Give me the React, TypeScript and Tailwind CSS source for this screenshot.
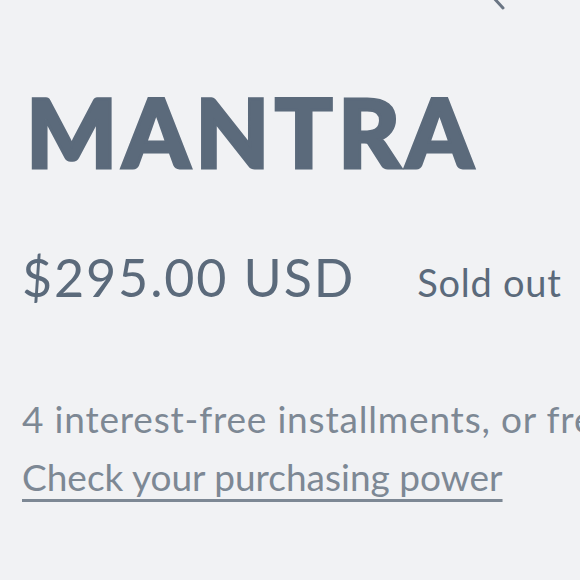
import React from "react";

export default function App() {
  return (
    <div className="relative w-[580px] h-[580px] overflow-hidden bg-[#f1f2f4] font-['Lato',sans-serif]">
      <svg className="absolute left-[486px] top-0" width="24" height="14" viewBox="0 0 24 14">
        <path d="M6 -4 L17 8" stroke="#6b7684" strokeWidth="3" strokeLinecap="round" fill="none" />
      </svg>
      <div className="flex flex-col pl-[22px] pt-[83px]">
        <h1 className="pl-[4px] text-[96px] leading-none font-black tracking-[0.055em] [font-kerning:none] text-[#5b6a7b] [-webkit-text-stroke:3px_#5b6a7b]">
          MANTRA
        </h1>
        <div className="flex items-baseline mt-[72px] gap-[62px]">
          <span className="text-[52px] leading-none text-[#5b6a7b] tracking-[0.036em]">$295.00 USD</span>
          <span className="text-[38px] leading-none text-[#5b6a7b] tracking-[0.02em]">Sold out</span>
        </div>
        <div className="mt-[87px] text-[37px] leading-[58px] text-[#7d8894] whitespace-nowrap">
          <p className="tracking-[0.022em]">4 interest-free installments, or free</p>
          <p>
            <a href="#" className="underline decoration-[3px] underline-offset-[8px]">
              Check your purchasing power
            </a>
          </p>
        </div>
      </div>
    </div>
  );
}
